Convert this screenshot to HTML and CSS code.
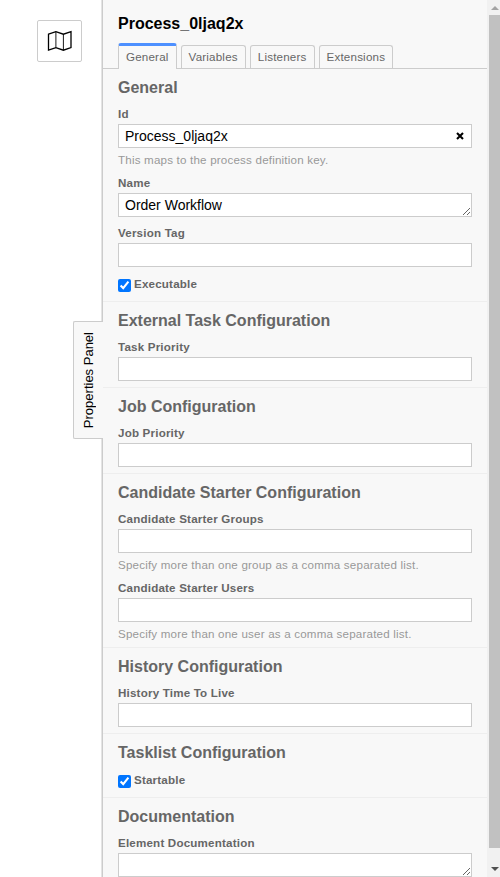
FILE: index.html
```html
<!DOCTYPE html>
<html lang="en">
<head>
<meta charset="utf-8">
<title>Properties Panel</title>
<link rel="stylesheet" href="styles.css">
</head>
<body>
<div class="modeler">
  <div class="canvas">
    <button class="minimap-toggle" aria-label="Minimap">
      <svg width="25" height="24" viewBox="0 0 25 24" fill="none" stroke="#000" stroke-width="1.3">
        <path d="M1.5 5.2 8.9 2.6 16.4 5.2 24 2.6V18.6L16.4 21.2 8.9 18.6 1.5 21.2Z"/>
        <path d="M8.9 2.8V18.5M16.4 5.2V21" stroke-width="0.9"/>
      </svg>
    </button>
  </div>
  <div class="panel">
    <div class="panel-toggle"><span>Properties Panel</span></div>
    <div class="content">
      <h1>Process_0ljaq2x</h1>
      <nav class="tabs">
        <a class="tab active">General</a>
        <a class="tab">Variables</a>
        <a class="tab">Listeners</a>
        <a class="tab">Extensions</a>
      </nav>
      <section class="group">
        <h2>General</h2>
        <div class="entry">
          <label>Id</label>
          <div class="field"><input type="text" value="Process_0ljaq2x"><button class="clear" aria-label="Clear"><svg width="8" height="8" viewBox="0 0 8 8" stroke="#000" stroke-width="2.1"><path d="M1 1 7 7M7 1 1 7"/></svg></button></div>
          <p class="description">This maps to the process definition key.</p>
        </div>
        <div class="entry"><label>Name</label><textarea>Order Workflow</textarea></div>
        <div class="entry"><label>Version Tag</label><input type="text"></div>
        <div class="entry check"><input type="checkbox" checked><label>Executable</label></div>
      </section>
      <section class="group">
        <h2>External Task Configuration</h2>
        <div class="entry"><label>Task Priority</label><input type="text"></div>
      </section>
      <section class="group">
        <h2>Job Configuration</h2>
        <div class="entry"><label>Job Priority</label><input type="text"></div>
      </section>
      <section class="group">
        <h2>Candidate Starter Configuration</h2>
        <div class="entry">
          <label>Candidate Starter Groups</label><input type="text">
          <p class="description">Specify more than one group as a comma separated list.</p>
        </div>
        <div class="entry">
          <label>Candidate Starter Users</label><input type="text">
          <p class="description">Specify more than one user as a comma separated list.</p>
        </div>
      </section>
      <section class="group">
        <h2>History Configuration</h2>
        <div class="entry"><label>History Time To Live</label><input type="text"></div>
      </section>
      <section class="group">
        <h2>Tasklist Configuration</h2>
        <div class="entry check"><input type="checkbox" checked><label>Startable</label></div>
      </section>
      <section class="group">
        <h2>Documentation</h2>
        <div class="entry"><label>Element Documentation</label><textarea></textarea></div>
      </section>
    </div>
    <div class="scrollbar">
      <i class="arrow up"></i>
      <i class="thumb"></i>
      <i class="arrow down"></i>
    </div>
  </div>
</div>
</body>
</html>
```
FILE: styles.css
```css
* { box-sizing: border-box; }
body { margin: 0; background: #fff; font-family: "Liberation Sans", Arial, sans-serif; font-size: 11.6px; line-height: 20px; color: #666; }
.modeler { display: flex; height: 877px; overflow: hidden; }
.canvas { width: 102px; padding: 20px 0 0 37px; flex: none; }
.minimap-toggle { display: flex; align-items: center; justify-content: center; width: 45px; height: 42px; padding: 0; border: 1px solid #ccc; border-radius: 2px; background: #fff; }
.panel { position: relative; display: flex; flex: 1; min-width: 0; border-left: 1px solid #ccc; background: #f8f8f8; box-shadow: -1px 0 0 #e4e4e4; }
.panel-toggle { position: absolute; left: -30px; top: 321px; width: 30px; height: 118px; display: flex; align-items: center; justify-content: center; border: 1px solid #ccc; border-right: 0; border-radius: 2px 0 0 2px; background: #f8f8f8; color: #000; font-size: 13px; }
.panel-toggle span { writing-mode: vertical-rl; transform: rotate(180deg); white-space: nowrap; }
.content { flex: 1; min-width: 0; }
h1 { margin: 14px 15px 9px; font-size: 16px; line-height: 20px; color: #000; }
.tabs { display: flex; align-items: flex-end; gap: 4px; height: 26px; padding-left: 15px; border-bottom: 1px solid #ccc; }
.tab, .entry label, .description { letter-spacing: 0.19px; }
.tab { height: 23px; padding: 1px 7px 0; border: 1px solid #ccc; border-bottom: 0; border-radius: 3px 3px 0 0; }
.tab.active { height: 26px; margin-bottom: -1px; padding-top: 1px; border-top: 3px solid #4d90ff; background: #f8f8f8; }
.group { padding-top: 9px; }
.group + .group { border-top: 1px solid #eee; }
h2 { margin: 0 15px 6px; font-size: 16px; line-height: 20px; }
.entry { margin: 0 15px 6px; }
.entry label { display: block; font-weight: bold; }
.field { position: relative; }
input[type="text"], textarea { display: block; width: 100%; height: 24px; margin: 0; padding: 2px 6px; border: 1px solid #ccc; border-radius: 0; background: #fff; font: 14px/18px "Liberation Sans", Arial, sans-serif; color: #000; }
textarea { overflow: hidden; }
.clear { position: absolute; right: 8px; top: 8px; display: flex; width: 8px; height: 8px; padding: 0; border: 0; background: none; }
.description { margin: 2px 0 -3px; color: #999; }
.check { display: flex; height: 22px; }
.check input { width: 13px; height: 13px; margin: 6px 3px 0 0; }
.check label { line-height: 22px; }
.scrollbar { position: relative; width: 13px; flex: none; background: #f1f1f1; }
.thumb { position: absolute; left: 2px; top: 15px; width: 11px; height: 833px; background: #c1c1c1; }
.arrow { position: absolute; left: 4px; border: 4px solid transparent; }
.up { top: 2px; border-bottom-color: #a3a3a3; }
.down { top: 867px; border-top-color: #505050; }
```
